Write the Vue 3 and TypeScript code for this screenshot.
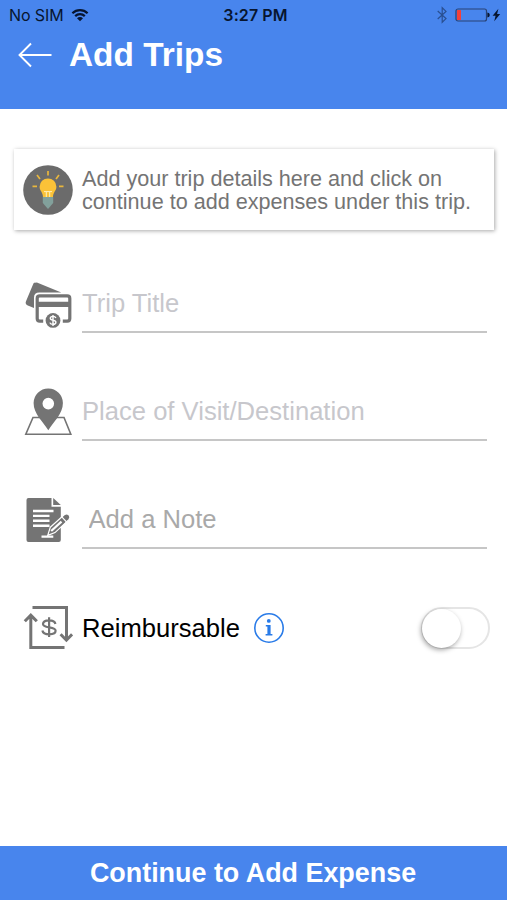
<script setup lang="ts">
import { ref } from 'vue'

const title = ref('')
const place = ref('')
const note = ref('')
const reimbursable = ref(false)
</script>

<template>
  <main class="screen">
    <header class="header">
      <div class="status">
        <div class="status-side">
          <span class="carrier">No SIM</span>
          <svg class="wifi" viewBox="0 0 18 14" width="18" height="14">
            <path d="M1.4 5.2a10.8 10.8 0 0 1 15.2 0M4.2 8.1a6.8 6.8 0 0 1 9.6 0" fill="none" stroke="#07152f" stroke-width="2.2" />
            <path d="M9 13.2 6 10.2a4.2 4.2 0 0 1 6 0z" fill="#07152f" />
          </svg>
        </div>
        <span class="time">3:27 PM</span>
        <div class="status-side right">
          <svg viewBox="0 0 10 18" width="10" height="18">
            <path d="M.7 5 9 12.6 5.2 16.3V1.7L9 5.4.7 13" fill="none" stroke="#294f91" stroke-width="1.2" />
          </svg>
          <svg class="battery" viewBox="0 0 46 14" width="46" height="14">
            <rect x="1" y="1" width="30.5" height="12" rx="2" fill="none" stroke="#294275" stroke-width="1.2" />
            <rect x="2" y="2" width="4" height="10" rx=".6" fill="#f3403c" />
            <path d="M32.4 4.6q2.4.3 2.4 2.4t-2.4 2.4z" fill="#07152f" />
            <path d="m43.4.8-5.8 7h3l-1.4 5.4 6-7.2h-3.1z" fill="#07152f" />
          </svg>
        </div>
      </div>
      <div class="title-row">
        <svg viewBox="0 0 34 26" width="34" height="26">
          <path d="M33.5 13H1.5M13 1.5 1.5 13 13 24.5" fill="none" stroke="#fff" stroke-width="1.9" />
        </svg>
        <h1>Add Trips</h1>
      </div>
    </header>

    <section class="tip">
      <svg viewBox="0 0 50 50" width="50" height="50">
        <circle cx="25" cy="25" r="24.8" fill="#6b6b6b" />
        <g stroke="#e9b73d" stroke-width="1.7">
          <path d="M25 6v4.5M14 10l3 4M36 10l-3 4M9.5 21.3H14M36 21.3h4.5" />
        </g>
        <path d="M19.8 32h10.4v6L25 44l-5.2-6z" fill="#82a09b" />
        <path d="M25 13.4a8.4 8.4 0 0 0-8.4 8.4c0 4.1 3.4 5.4 3.4 10.3h10c0-4.9 3.4-6.2 3.4-10.3a8.4 8.4 0 0 0-8.4-8.4z" fill="#fac238" />
        <path d="M21 26.6h8M23.3 27v5M26.7 27v5" fill="none" stroke="#fff0b9" />
      </svg>
      <p>Add your trip details here and click on<br>continue to add expenses under this trip.</p>
    </section>

    <form class="form" @submit.prevent>
      <label class="row">
        <svg class="icon" viewBox="0 0 50 50" width="50" height="50">
          <path d="m13.3 4.2 25 10.4H16.4q-5.4 0-5.4 5v10.3l-6.2-2.5q-3-1.2-1.8-4.1l6.8-16.4q1-3.1 3.5-2z" fill="#747474" />
          <path d="M20.2 43.2h-3.4q-2.6 0-2.6-2.6V20.4q0-2.6 2.6-2.6h27.4q2.6 0 2.6 2.6v20.2q0 2.6-2.6 2.6h-4.4" fill="none" stroke="#747474" stroke-width="3.2" />
          <path d="M14 23.7h33v5.2H14z" fill="#747474" />
          <circle cx="30" cy="42.4" r="7.4" fill="#747474" />
          <path d="M32.9 39.9c-.5-1.2-1.5-1.5-2.9-1.5-1.6 0-2.7.6-2.7 1.9 0 2.8 5.6 1.2 5.6 4 0 1.4-1.2 2.1-2.9 2.1-1.6 0-2.7-.6-3.1-1.8M30 36.9v11" fill="none" stroke="#fff" stroke-width="1.4" />
        </svg>
        <input v-model="title" class="field" type="text" placeholder="Trip Title">
      </label>

      <label class="row">
        <svg class="icon" viewBox="0 0 50 50" width="50" height="50">
          <path d="M10 31.5h31L47.8 48.2H2.8z" fill="#fff" stroke="#747474" stroke-width="1.6" />
          <path fill-rule="evenodd" d="M25.3 2.5A14.6 14.6 0 0 0 10.6 17.1C10.6 28 19.8 35.5 25.3 44.2 30.8 35.5 39.9 28 39.9 17.1A14.6 14.6 0 0 0 25.3 2.5zm0 9.3a5.8 5.8 0 1 1 0 11.6 5.8 5.8 0 0 1 0-11.6z" fill="#747474" />
        </svg>
        <input v-model="place" class="field" type="text" placeholder="Place of Visit/Destination">
      </label>

      <label class="row">
        <svg class="icon" viewBox="0 0 50 50" width="50" height="50">
          <path d="M5.5 4h23v8.7h9.3V46q0 2-2 2H5.5q-2 0-2-2V6q0-2 2-2z" fill="#747474" />
          <path d="M30.2 4v7.1h7.6z" fill="#747474" />
          <path d="M10 17h20.5M10 21.9h16.5M10 26.8h16.5M10 31.7h16.5M18.5 42.6h11.8" stroke="#fff" stroke-width="2.4" />
          <path d="m27.3 33.2 14.2-12.6q2.6-1.5 4.6.6 1.8 2.2-.2 4.4L32 38.6l-7.3 2.8z" fill="#747474" stroke="#fff" stroke-width="1.2" />
          <path d="m28.2 37 10.3-9.4" stroke="#fff" stroke-width="2.2" />
          <path d="m38.3 22.4 5.3 5.6" stroke="#fff" stroke-width="1.1" />
        </svg>
        <input v-model="note" class="field note" type="text" placeholder="Add a Note">
      </label>

      <div class="row toggle-row">
        <svg class="icon" viewBox="0 0 50 50" width="50" height="50">
          <g fill="none" stroke="#747474" stroke-width="3">
            <path d="M9.5 4.6h34V37M37.6 31.3 43.4 37.2l5.7-5.9M41.5 44.4H7.8V12M1.8 18.3l6-6.2 6 6.2" />
            <path d="M32.4 21q-.5-3.6-6.4-3.6t-6 3.6c0 4.8 12.6 2.1 12.6 6.8q0 3.5-6.3 3.5T19.4 27.5M26.1 14.3v19.8" stroke-width="2.2" />
          </g>
        </svg>
        <span class="label">Reimbursable</span>
        <svg class="info" viewBox="0 0 32 32" width="32" height="32">
          <circle cx="16" cy="16" r="14.2" fill="none" stroke="#297be8" stroke-width="1.6" />
          <circle cx="15.8" cy="8.9" r="1.9" fill="#297be8" />
          <path d="M12.8 13h4.8v9h1.8v1.4h-6.8V22h1.8v-7.4h-1.6z" fill="#297be8" />
        </svg>
        <button type="button" class="switch" :class="{ on: reimbursable }" role="switch" :aria-checked="reimbursable" @click="reimbursable = !reimbursable">
          <span class="knob"></span>
        </button>
      </div>
    </form>

    <button class="continue" type="button">Continue to Add Expense</button>
  </main>
</template>

<style>
body {
  background: #fff;
}
</style>

<style scoped>
* {
  box-sizing: border-box;
}

.screen {
  display: flex;
  flex-direction: column;
  height: 900px;
  font-family: "Liberation Sans", sans-serif;
}

svg {
  display: block;
  flex: none;
}

.header {
  flex: none;
  height: 108.5px;
  background: #4885ed;
}

.status {
  display: grid;
  grid-template-columns: 1fr auto 1fr;
  align-items: center;
  height: 30px;
  padding: 0 6px 0 9px;
  color: #07152f;
  font-family: Inter, sans-serif;
  font-size: 16px;
}

.status-side {
  display: flex;
  align-items: center;
  gap: 8px;
}

.status-side:first-child {
  gap: 7px;
}

.right {
  justify-content: flex-end;
}

.carrier {
  letter-spacing: -0.1px;
}

.time {
  padding-left: 1px;
  font-weight: 600;
  letter-spacing: 0.1px;
}

.title-row {
  display: flex;
  align-items: center;
  gap: 17px;
  height: 50px;
  padding-left: 18px;
}

h1 {
  margin: 0;
  color: #fff;
  font-size: 33.4px;
  line-height: 38px;
}

.tip {
  display: flex;
  flex: none;
  align-items: center;
  gap: 9px;
  height: 81px;
  margin: 40.5px 13px 0 14px;
  padding-left: 9px;
  background: #fff;
  box-shadow: 1px 1px 4px rgba(0, 0, 0, 0.34);
}

.tip p {
  margin: 1px 0 0;
  color: #747474;
  font-size: 21.6px;
  line-height: 23.5px;
  white-space: nowrap;
}

.form {
  flex: 1;
  padding: 48px 20px 0 23px;
}

.row {
  display: flex;
  align-items: flex-start;
  height: 108px;
}

.icon {
  margin-right: 9px;
}

.field {
  flex: 1;
  min-width: 0;
  height: 54.5px;
  padding: 0 0 1px;
  border: 0;
  border-bottom: 2px solid #c6c6c6;
  border-radius: 0;
  outline: 0;
  background: transparent;
  color: #222;
  font-family: inherit;
  font-size: 25.6px;
}

.field::placeholder {
  color: #c7c7cc;
  opacity: 1;
}

.note {
  padding-left: 6.5px;
}

.note::placeholder {
  color: #a9a9a9;
}

.toggle-row {
  align-items: center;
  height: 52px;
}

.label {
  color: #000;
  font-size: 25.6px;
}

.info {
  margin-left: 13px;
}

.switch {
  width: 69px;
  height: 42px;
  margin: 0 -2.5px 0 auto;
  padding: 0;
  border: 2px solid #e5e5e5;
  border-radius: 21px;
  background: #fff;
}

.knob {
  display: block;
  width: 39px;
  height: 39px;
  margin-left: -1px;
  border-radius: 50%;
  background: #fff;
  box-shadow: -1px 2px 5px rgba(0, 0, 0, 0.36);
}

.on {
  background: #4885ed;
}

.on .knob {
  margin-left: auto;
}

.continue {
  flex: none;
  height: 54px;
  padding: 1px 1px 0 0;
  border: 0;
  background: #4885ed;
  color: #fff;
  font-family: inherit;
  font-size: 26.9px;
  font-weight: 700;
}
</style>
